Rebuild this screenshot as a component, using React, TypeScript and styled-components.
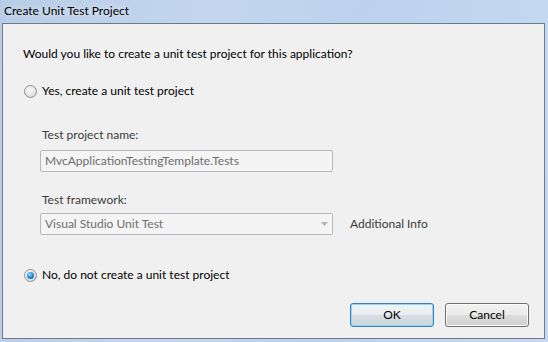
import styled, { createGlobalStyle } from "styled-components";

const GlobalStyle = createGlobalStyle`
  html, body {
    margin: 0;
    padding: 0;
    background: #bcd2ec;
  }
  body {
    font-family: Lato, "Noto Sans", sans-serif;
    font-size: 12px;
  }
`;

const Window = styled.div`
  width: 548px;
  height: 342px;
  display: flex;
  flex-direction: column;
  background: linear-gradient(100deg, #b7cde6 0%, #c3d6ee 35%, #bcd2ec 60%, #c6d9f1 100%);
  color: #000;
`;

const TitleBar = styled.div`
  height: 23px;
  flex: none;
  padding-left: 4px;
  line-height: 22px;
  font-size: 12px;
  color: #000;
  text-shadow: 0 0 6px rgba(255, 255, 255, 0.9);
`;

const Client = styled.div`
  flex: 1;
  margin: 0 3px 3px 2px;
  border: 1px solid #6e7a88;
  background: #f0f0f0;
  display: flex;
  flex-direction: column;
  padding: 22px 15px 0 20px;
  line-height: 16px;
  font-size: 12px;
  color: #000;
`;

const Question = styled.div``;

const Section = styled.div<{ $top: number }>`
  margin-top: ${({ $top }) => $top}px;
`;

const RadioRow = styled.label`
  display: flex;
  align-items: center;
  gap: 5px;
`;

const Radio = styled.span<{ $checked?: boolean }>`
  width: 13px;
  height: 13px;
  box-sizing: border-box;
  border-radius: 50%;
  border: 1px solid #8e8f8f;
  background: radial-gradient(circle at 40% 35%, #fdfdfd 0%, #e4e4e4 55%, #cfcfcf 100%);
  display: flex;
  align-items: center;
  justify-content: center;
  margin-left: 1px;

  &::after {
    content: "";
    display: ${({ $checked }) => ($checked ? "block" : "none")};
    width: 7px;
    height: 7px;
    border-radius: 50%;
    background: radial-gradient(circle at 40% 35%, #9ee3ff 0%, #2b8fd6 45%, #0d4f8f 100%);
  }
`;

const Indent = styled.div`
  padding-left: 17px;
  display: flex;
  flex-direction: column;
`;

const Label = styled.div<{ $top: number }>`
  margin-top: ${({ $top }) => $top}px;
  padding-left: 2px;
  color: #3b3b3b;
`;

const Field = styled.div`
  width: 293px;
  height: 22px;
  box-sizing: border-box;
  border: 1px solid #b5b9bd;
  border-radius: 2px;
  background: #f4f4f4;
  color: #6d6d6d;
  padding: 0 4px;
  line-height: 20px;
`;

const TextBox = styled(Field)`
  margin-top: 7px;
`;

const ComboRow = styled.div`
  margin-top: 5px;
  display: flex;
  align-items: center;
  gap: 17px;
`;

const Combo = styled(Field)`
  display: flex;
  align-items: center;
  justify-content: space-between;
`;

const InfoText = styled.span`
  color: #3b3b3b;
`;

const Footer = styled.div`
  margin-top: auto;
  margin-bottom: 11px;
  display: flex;
  justify-content: flex-end;
  gap: 11px;
`;

const Button = styled.button<{ $primary?: boolean }>`
  width: 84px;
  height: 24px;
  box-sizing: border-box;
  font: inherit;
  color: #000;
  border-radius: 3px;
  border: 1px solid ${({ $primary }) => ($primary ? "#3c7fb1" : "#707070")};
  background: ${({ $primary }) =>
    $primary
      ? "linear-gradient(#f0f4f7 0%, #e8edf1 50%, #d8dee3 51%, #cdd4da 100%)"
      : "linear-gradient(#f2f2f2 0%, #ebebeb 50%, #dddddd 51%, #cfcfcf 100%)"};
  box-shadow: inset 0 0 0 1px ${({ $primary }) => ($primary ? "#8fd9f7" : "#fcfcfc")};
  padding: 0;
`;

const RadioOption = ({ checked, label }: { checked?: boolean; label: string }) => (
  <RadioRow>
    <Radio $checked={checked} />
    <span>{label}</span>
  </RadioRow>
);

const ComboArrow = () => (
  <svg width="7" height="4" viewBox="0 0 7 4">
    <path d="M0 0 H7 L3.5 4 Z" fill="#b4b4b4" />
  </svg>
);

export default function App() {
  return (
    <Window>
      <GlobalStyle />
      <TitleBar>Create Unit Test Project</TitleBar>
      <Client>
        <Question>Would you like to create a unit test project for this application?</Question>
        <Section $top={21}>
          <RadioOption label="Yes, create a unit test project" />
        </Section>

        <Indent>
          <Label $top={28}>Test project name:</Label>
          <TextBox>MvcApplicationTestingTemplate.Tests</TextBox>
          <Label $top={20}>Test framework:</Label>
          <ComboRow>
            <Combo>
              <span>Visual Studio Unit Test</span>
              <ComboArrow />
            </Combo>
            <InfoText>Additional Info</InfoText>
          </ComboRow>
        </Indent>

        <Section $top={32}>
          <RadioOption checked label="No, do not create a unit test project" />
        </Section>

        <Footer>
          <Button $primary>OK</Button>
          <Button>Cancel</Button>
        </Footer>
      </Client>
    </Window>
  );
}
